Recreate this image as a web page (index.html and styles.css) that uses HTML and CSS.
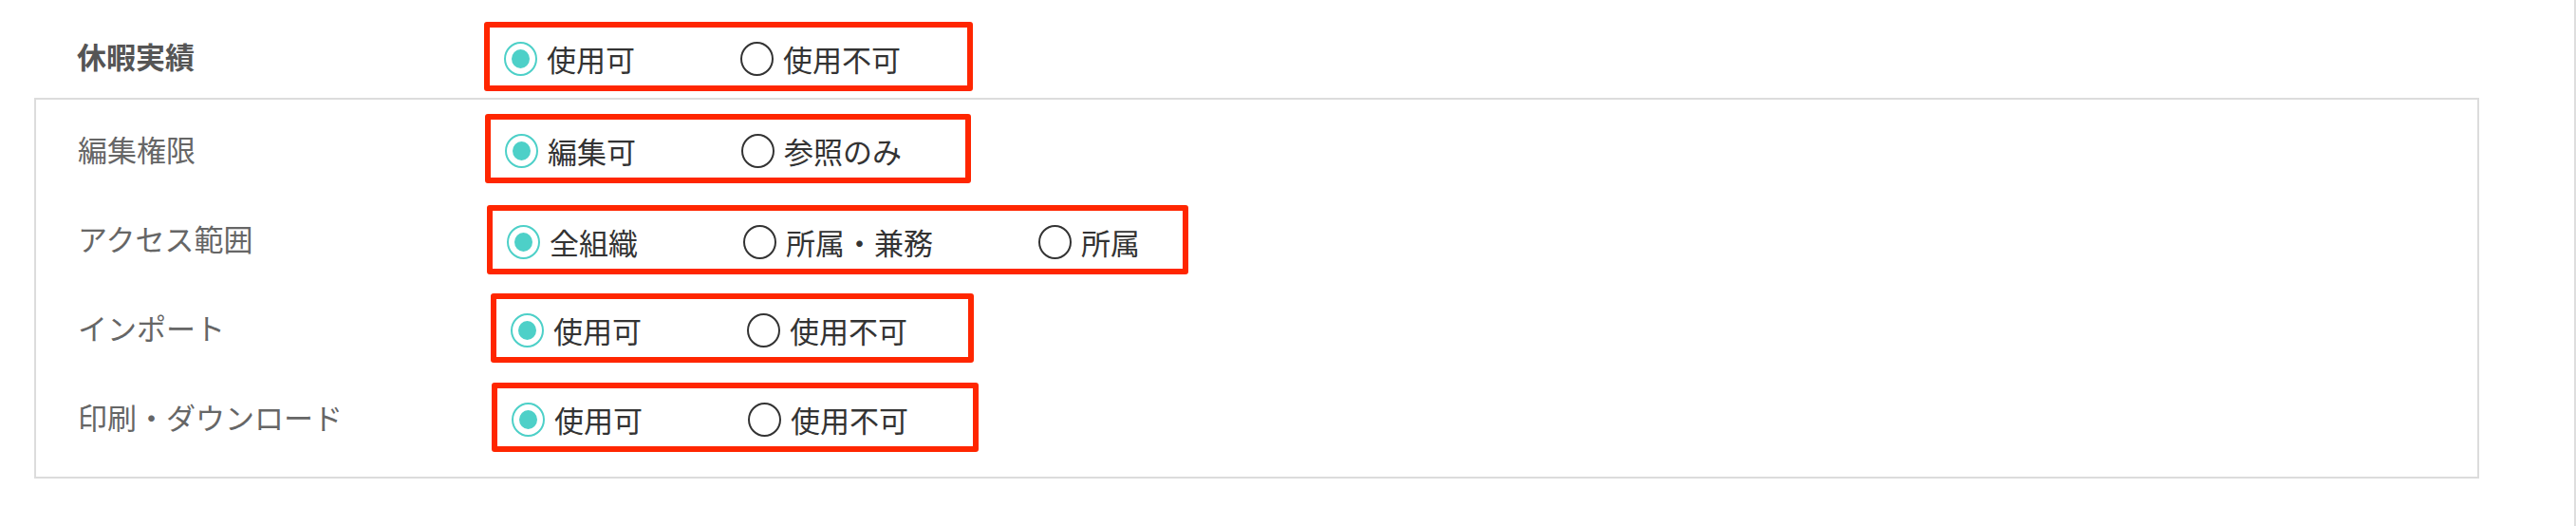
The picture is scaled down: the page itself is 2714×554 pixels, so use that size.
FILE: index.html
```html
<!doctype html>
<html lang="ja">
<head>
	<meta charset="UTF-8">
	<title>権限設定</title>
	<link rel="stylesheet" href="styles.css">
</head>
<body>
	<div class="page">
		<div class="row row-top">
			<div class="label label-bold">休暇実績</div>
			<div class="choices box-1">
				<span class="opt"><span class="radio on"></span>使用可</span>
				<span class="opt"><span class="radio"></span>使用不可</span>
			</div>
		</div>

		<div class="panel">
			<div class="row">
				<div class="label">編集権限</div>
				<div class="choices box-2">
					<span class="opt"><span class="radio on"></span>編集可</span>
					<span class="opt"><span class="radio"></span>参照のみ</span>
				</div>
			</div>
			<div class="row">
				<div class="label">アクセス範囲</div>
				<div class="choices box-3">
					<span class="opt"><span class="radio on"></span>全組織</span>
					<span class="opt"><span class="radio"></span>所属・兼務</span>
					<span class="opt"><span class="radio"></span>所属</span>
				</div>
			</div>
			<div class="row">
				<div class="label">インポート</div>
				<div class="choices box-4">
					<span class="opt"><span class="radio on"></span>使用可</span>
					<span class="opt"><span class="radio"></span>使用不可</span>
				</div>
			</div>
			<div class="row">
				<div class="label">印刷・ダウンロード</div>
				<div class="choices box-5">
					<span class="opt"><span class="radio on"></span>使用可</span>
					<span class="opt"><span class="radio"></span>使用不可</span>
				</div>
			</div>
		</div>
	</div>
</body>
</html>
```

FILE: styles.css
```css
html,body{
	margin:0;
	padding:0;
	background:#fff;
}
body{
	font-family:"Noto Sans CJK JP","Noto Sans",sans-serif;
	font-size:31px;
	color:#333;
}
.page{
	width:2714px;
	height:554px;
	box-sizing:border-box;
	border-right:2px solid #dedede;
	padding:15px 0 0 36px;
}
.row{
	display:flex;
	align-items:center;
	height:94px;
}
.row-top{
	height:88px;
	padding-left:45px;
}
.label{
	width:429px;
	flex:none;
	color:#666;
	line-height:1;
	padding-bottom:4px;
}
.label-bold{
	font-weight:bold;
	color:#555;
	padding-bottom:2px;
}
.panel{
	width:2576px;
	box-sizing:border-box;
	border:2px solid #dcdcdc;
	padding:6px 0 15px 44px;
}

/* 赤枠 */
.choices{
	display:flex;
	align-items:center;
	height:73px;
	box-sizing:border-box;
	border:6px solid #ff2600;
	border-radius:3px;
	padding:5px 0 0 15px;
}
.box-1{width:515px;}
.box-2{width:512px;margin-left:0;margin-top:-4px;}
.box-3{width:739px;margin-left:2px;}
.box-4{width:509px;margin-left:6px;margin-top:-2px;}
.box-5{width:513px;margin-left:7px;margin-top:-2px;}

.opt{
	display:flex;
	align-items:center;
	margin-right:111px;
	line-height:1;
	color:#333;
	white-space:nowrap;
}
.radio{
	width:35px;
	height:36px;
	box-sizing:border-box;
	border:2px solid #333;
	border-radius:50%;
	margin-right:10px;
	flex:none;
	position:relative;
}
.radio.on{
	border-color:#4dd0c8;
}
.radio.on:after{
	content:"";
	position:absolute;
	left:6px;
	top:6px;
	width:19px;
	height:20px;
	border-radius:50%;
	background:#4dd0c8;
}
```
